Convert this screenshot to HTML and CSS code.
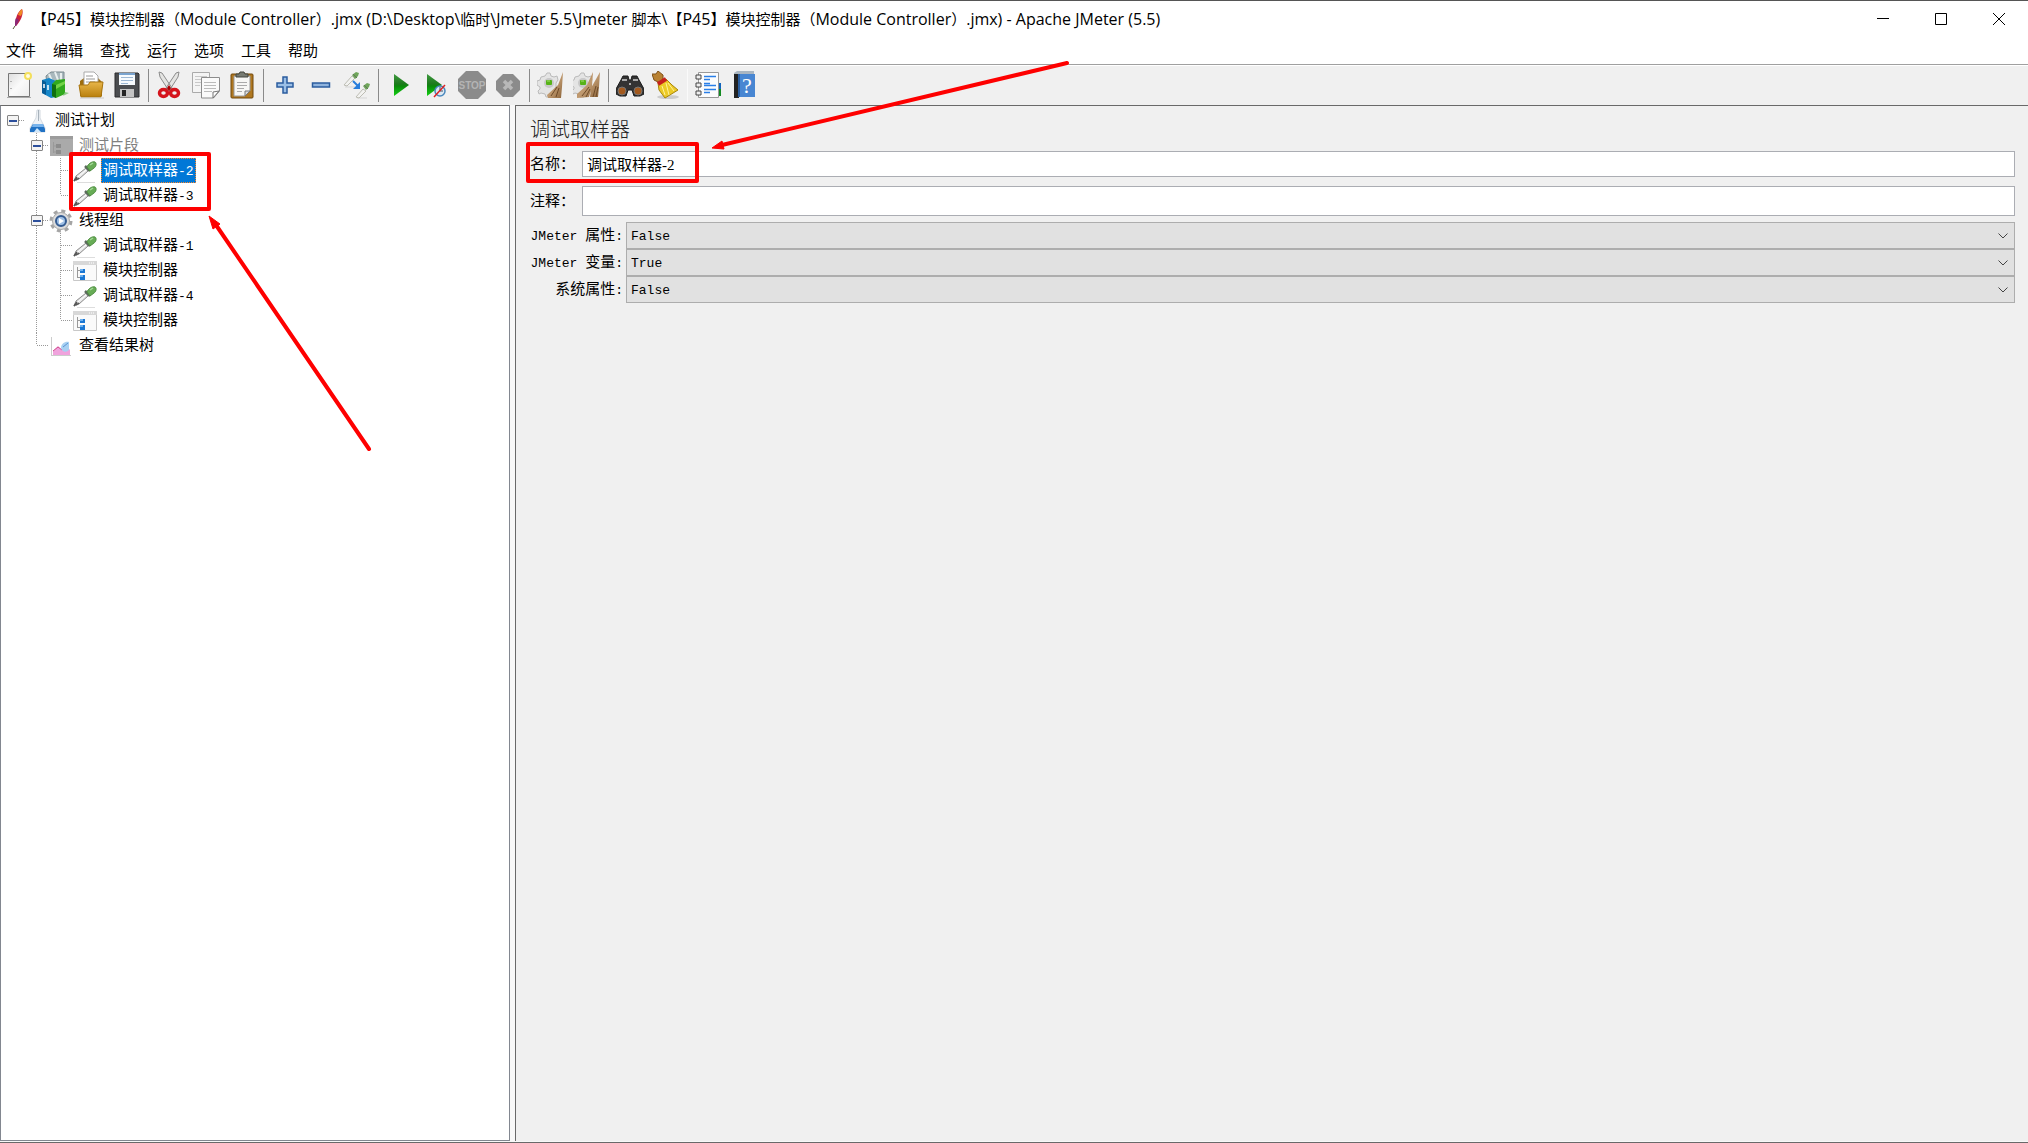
FILE: index.html
```html
<!DOCTYPE html>
<html lang="zh-CN">
<head>
<meta charset="utf-8">
<title>Apache JMeter (5.5)</title>
<link rel="stylesheet" href="styles.css">
</head>
<body>
<svg class="defs" aria-hidden="true">
  <defs>
    <linearGradient id="play" x1="0" y1="0" x2="0" y2="1"><stop offset="0" stop-color="#3f9a3f"/><stop offset=".45" stop-color="#1d7a1d"/><stop offset=".55" stop-color="#0a8a0a"/><stop offset="1" stop-color="#14d014"/></linearGradient>
    <linearGradient id="paper" x1="0" y1="0" x2="1" y2="1"><stop offset="0" stop-color="#dedede"/><stop offset=".5" stop-color="#fafafa"/><stop offset="1" stop-color="#ececec"/></linearGradient>
    <linearGradient id="gold" x1="0" y1="0" x2="0" y2="1"><stop offset="0" stop-color="#e8b64a"/><stop offset="1" stop-color="#b97f0c"/></linearGradient>
    <linearGradient id="bristle" x1="0" y1="0" x2="1" y2="1"><stop offset="0" stop-color="#a87848"/><stop offset=".5" stop-color="#c09a70"/><stop offset="1" stop-color="#8a6238"/></linearGradient>
    <symbol id="dropper" viewBox="0 0 24 24">
      <path d="M4 23.500h18" stroke="#ddd"/>
      <path d="M1 22l2-5 10-8 2 3-9 8z" fill="#e6e6e6" stroke="#8a8a8a"/>
      <path d="M5 18l8-7" stroke="#fff"/><path d="M1 22l3-4M3 21l3-2" stroke="#555" stroke-width="1.500"/>
      <path d="M12 7l5 5" stroke="#5c6a5c" stroke-width="2.500"/>
      <path d="M14 8c1-3 5-6 8-5 2 1 1 5-1 6l-4 3z" fill="#67ac55" stroke="#4f8e42"/><path d="M17 6l3-2" stroke="#a4d898" stroke-width="1.500"/>
    </symbol>
    <symbol id="module" viewBox="0 0 24 24">
      <path d="M.5 2.500h23v19H.5z" fill="#fafafa" stroke="#c8c8c8"/><path d="M0 2h24v4H0z" fill="#d8d8d8"/><path d="M16 4h6" stroke="#fff" stroke-dasharray="1 1"/>
      <path d="M4.500 8v10M4 11.500h4M4 18.500h4" stroke="#999" fill="none"/><path d="M7 10h5v4H7zM7 16h5v5H7z" fill="#1976d2"/><path d="M7 10h3v2H7zM7 16h3v2H7z" fill="#6cb0ee"/>
    </symbol>
    <symbol id="brush" viewBox="0 0 28 28">
      <path d="M9 5l2-3h3l1 3 3 1 3-1 1 4-2 3v9l-3 2-2 1-1 2h-4l-1-3-4-1-2 1-1-3 2-2v-2l-3-2v-4l3-1 1-3z" fill="#e4e4e4" stroke="#bbb"/>
      <circle cx="13" cy="12" r="5" fill="#c8c8c8"/><rect x="10" y="9" width="6" height="5" rx="1" fill="#57b318"/><path d="M11 10h3" stroke="#a4e070"/>
    </symbol>
  </defs>
</svg>

<div class="window">
  <header class="titlebar">
    <svg class="feather" viewBox="0 0 18 24" aria-hidden="true"><path d="M5 19C5 11 8 4 12 2c2 4-1 12-6 17z" fill="#c8203c"/><path d="M8 8c1-4 3-5 4-6 1 2 0 5-1 7z" fill="#f08a24"/><path d="M5 19c0-4 0-6 1-8l3 2c-1 3-2 4-3 6z" fill="#8a2a78"/><path d="M3 22l2-3" stroke="#553"/></svg>
    <h1 class="title">【<span>P45</span>】模块控制器（<span>Module Controller</span>）<span>.jmx (D:\Desktop\</span>临时<span>\Jmeter 5.5\Jmeter </span>脚本<span>\</span>【<span>P45</span>】模块控制器（<span>Module Controller</span>）<span>.jmx) - Apache JMeter (5.5)</span></h1>
    <div class="controls">
      <button aria-label="最小化"><svg viewBox="0 0 14 14"><path d="M1 6.500h12"/></svg></button>
      <button aria-label="最大化"><svg viewBox="0 0 14 14"><path d="M1.500 1.500h11v11h-11z"/></svg></button>
      <button aria-label="关闭"><svg viewBox="0 0 14 14"><path d="M1 1l12 12M13 1L1 13"/></svg></button>
    </div>
  </header>

  <nav class="menubar">
    <button>文件</button><button>编辑</button><button>查找</button><button>运行</button><button>选项</button><button>工具</button><button>帮助</button>
  </nav>

  <div class="toolbar" role="toolbar">
    <button aria-label="新建"><svg viewBox="0 0 28 28"><path d="M3.500 2.500h21v23h-21z" fill="url(#paper)" stroke="#777"/><path d="M2 26.500h24" stroke="#aaa"/><path d="M6 10v1M6 17v1" stroke="#777"/><circle cx="23" cy="5" r="3" fill="#fffbe0" stroke="#f3df5c" stroke-width="2"/></svg></button>
    <button aria-label="模板"><svg viewBox="0 0 28 28"><path d="M5 5l5-4h13v12H6z" fill="#a9b8bd" stroke="#7b8a90"/><path d="M8 3l3 7M14 1l3 8M20 2v8" stroke="#e8eeee" stroke-width="2"/><path d="M1 9l7-2 7 3v16l-5 1-9-5z" fill="#1686c8"/><path d="M1 9l4 2v13l-4-2z" fill="#075b96"/><path d="M3 13v4M7 14v5" stroke="#fff" stroke-width="1.500"/><path d="M11 13l4-4 9-1v15l-9 4-4-2z" fill="#31a91e"/><path d="M11 13l4 1v13l-4-2z" fill="#10700f"/><path d="M15 14l9-4v3l-9 5z" fill="#71d347"/><path d="M24 21l4 1-6 3" fill="#8fca87"/></svg></button>
    <button aria-label="打开"><svg viewBox="0 0 28 28"><path d="M3 10l4-3h14l4 4v14H3z" fill="#9d6d0e"/><path d="M7 1h10l4 4v12H7z" fill="#fff" stroke="#aaa"/><path d="M9 5h7M9 8h9M9 11h9" stroke="#999"/><path d="M2 14h9l2-3h13l-2 15H4z" fill="url(#gold)" stroke="#a8740e"/><path d="M3 27h24" stroke="#c8c8c8"/></svg></button>
    <button aria-label="保存"><svg viewBox="0 0 28 28"><path d="M2 2h23l1 1v23H2z" fill="#4b4d50" stroke="#2d2d2f"/><path d="M6 2h16v12H6z" fill="#f6fafd"/><path d="M6 2h16v2H6z" fill="#7aa4cf"/><path d="M8 6.500h12M8 9.500h12M8 12.500h7" stroke="#9db8d4"/><path d="M7 18h14v8H7z" fill="#c4c4c4"/><path d="M9 19h4v6H9z" fill="#242424"/></svg></button>
    <i class="sep"></i>
    <button aria-label="剪切"><svg viewBox="0 0 28 28"><path d="M3 1l3 1 10 15-3 3L4 6zM23 1l-3 1-10 15 3 3L22 6z" fill="#e4e4e2" stroke="#8c8c8c"/><path d="M11 17l2-3 2 3-2 3z" fill="#a00"/><ellipse cx="7.500" cy="22" rx="4" ry="3.500" fill="#efefef" stroke="#d5141c" stroke-width="3.500"/><ellipse cx="18.500" cy="22" rx="4" ry="3.500" fill="#efefef" stroke="#d5141c" stroke-width="3.500"/></svg></button>
    <button aria-label="复制"><svg viewBox="0 0 28 28"><path d="M.5 1.500h17v20H.5z" fill="#f4f4f4" stroke="#aaa"/><path d="M3 5.500h12M3 8.500h12M3 11.500h8M3 14.500h5" stroke="#c8c8c8"/><path d="M9.500 6.500h18V20l-6 7h-12z" fill="#fafafa" stroke="#8c8c8c"/><path d="M12 11.500h12M12 14.500h12M12 17.500h12M12 20.500h8" stroke="#bbb"/><path d="M21 27v-6l6-1z" fill="#fff" stroke="#777"/></svg></button>
    <button aria-label="粘贴"><svg viewBox="0 0 28 28"><rect x="3" y="3" width="22" height="24" rx="1" fill="#b07820" stroke="#70480c"/><path d="M6 5h16v15l-5 5H6z" fill="#f7f7f5" stroke="#999"/><path d="M9 11.500h10M9 14.500h10M9 17.500h7M9 20.500h5" stroke="#aaa"/><path d="M17 25v-5h5z" fill="#ddd" stroke="#777"/><path d="M8 6V3h3l1-2h4l1 2h3v3z" fill="#777b72" stroke="#44473f"/></svg></button>
    <i class="sep"></i>
    <button aria-label="展开"><svg viewBox="0 0 28 28"><path d="M12 6h4v6h6v4h-6v6h-4v-6H6v-4h6z" fill="#9bbfe6" stroke="#2b5c9e" stroke-width="1.500"/></svg></button>
    <button aria-label="折叠"><svg viewBox="0 0 28 28"><path d="M5.500 12h17v4h-17z" fill="#8fb3dd" stroke="#2b5c9e" stroke-width="1.500"/></svg></button>
    <button aria-label="切换"><svg viewBox="0 0 28 28"><path d="M2 16h10M14 27h10" stroke="#d5d5d5"/><path d="M1 14l8-9 3 2-8 8zM13 26l7-8 3 2-7 7z" fill="#f2f2f0" stroke="#bdbdb4"/><path d="M9 4l4-3 3 1-1 3-3 3zM20 15l4-3 3 1-1 3-3 3z" fill="#6fa55a"/><path d="M10 3l4 4M21 14l4 4" stroke="#5f7a58"/><path d="M10 10l5 5" stroke="#287ddb" stroke-width="2"/><path d="M17 11v7h-7z" fill="#287ddb"/></svg></button>
    <i class="sep"></i>
    <button aria-label="启动"><svg viewBox="0 0 28 28"><path d="M8 3l15 11L8 25z" fill="url(#play)"/></svg></button>
    <button aria-label="不停顿启动"><svg viewBox="0 0 28 28"><path d="M5 3l15 11L5 25z" fill="url(#play)"/><circle cx="18" cy="20" r="5" fill="#dce8f2" stroke="#4a88bd" stroke-width="1.500"/><path d="M18 16v4h3" stroke="#456" fill="none"/><path d="M12 26l11-12" stroke="#d22" stroke-width="1.500"/></svg></button>
    <button aria-label="停止" disabled><svg viewBox="0 0 28 28"><path d="M8 0h12l8 8v12l-8 8H8l-8-8V8z" fill="#8b8b8b"/><text x="14" y="18" text-anchor="middle" class="stop">STOP</text></svg></button>
    <button aria-label="关闭" disabled><svg viewBox="0 0 28 28"><path d="M9 3h10l7 7v9l-7 7H9l-7-7v-9z" fill="#8b8b8b"/><path d="M10 10l8 8M18 10l-8 8" stroke="#b8b8b8" stroke-width="3.500"/></svg></button>
    <i class="sep"></i>
    <button aria-label="清除"><svg viewBox="0 0 28 28"><use href="#brush" x="-1" y="0" width="28" height="28"/><path d="M26 1l-1 15-1 11-13 0-1-3 11-10z" fill="url(#bristle)"/><path d="M14 25l6-9M19 26l3-9" stroke="#6e4b28"/></svg></button>
    <button aria-label="清除全部"><svg viewBox="0 0 28 28"><use href="#brush" x="-3" y="0" width="28" height="28"/><path d="M20 1l-1 14-3 11-12 1v-4l10-9zM27 1l-1 15-1 10h-8l1-9z" fill="url(#bristle)"/><path d="M9 25l7-9M13 26l4-8M20 26l3-11M23 26l2-10" stroke="#6e4b28"/></svg></button>
    <i class="sep"></i>
    <button aria-label="查找"><svg viewBox="0 0 28 28"><path d="M5 9l2-4h5l1 4h2l1-4h5l2 4 5 9v5l-4 2h-6l-2-6h-4l-2 6H4l-4-2v-5z" fill="#333" stroke="#1c1c1c"/><path d="M6 9h5M17 9h5M13 13h2" stroke="#aaa" stroke-width="2"/><circle cx="6" cy="20" r="4" fill="#a45a1e" stroke="#777"/><circle cx="22" cy="20" r="4" fill="#a45a1e" stroke="#777"/></svg></button>
    <button aria-label="重置查找"><svg viewBox="0 0 28 28"><ellipse cx="16" cy="26" rx="11" ry="2" fill="#ccc"/><path d="M0 3l2 6 6 3 3-3V4L6 0 4 3z" fill="#b98233" stroke="#80531a"/><path d="M6 12l8-4 6 6 6 5-13 8-6-8z" fill="#ecca27" stroke="#a8860d"/><path d="M14 12l3 12M16 12l6 8M10 15l3 9" stroke="#fff19a"/><path d="M6 13l8-5" stroke="#c7201c" stroke-width="4"/></svg></button>
    <i class="sep faint"></i>
    <button aria-label="函数助手"><svg viewBox="0 0 28 28"><path d="M22 12h4v6h-4z" fill="#1164bd"/><path d="M22 18h4v7h-4z" fill="#138a22"/><path d="M3.500 1.500h20v25h-20z" fill="#fcfcfc" stroke="#999"/><path d="M9 5.500h12M9 8.500h6M9 12.500h6M9 14.500h12M9 18.500h12M9 21.500h6" stroke="#2a7fe8" stroke-width="1.500"/><path d="M1 4h5v4H1zM1 12h5v4H1zM1 20h5v4H1z" fill="#eee" stroke="#444"/></svg></button>
    <button aria-label="帮助"><svg viewBox="0 0 28 28"><path d="M3 2l3-2h17v3H3z" fill="#aab6c1"/><path d="M3 3h5v24H3z" fill="#222"/><path d="M7 3h17v23H7z" fill="#4886d2"/><path d="M7 3h2v23H7z" fill="#295d9e"/><text x="16" y="22" text-anchor="middle" class="help">?</text></svg></button>
  </div>

  <main class="workspace">
    <ul class="tree" role="tree">
      <li><i class="cell stub"><button class="toggle" aria-label="折叠"></button></i><svg class="icon" viewBox="0 0 24 24"><path d="M12 1h3v8l5 10v4H5v-4l6-10z" fill="#eef2f6" stroke="#d4dae0"/><path d="M8 15h10l2 5v3H5v-3z" fill="#2172c4"/><path d="M8 15h10l1 3H7z" fill="#79b4ec"/><path d="M9 23l3-4 4 4z" fill="#cfe6fa"/><path d="M13.500 1v11" stroke="#a9b3bc"/></svg><span class="name">测试计划</span></li>
      <li><i class="cell"></i><i class="cell down stub"><button class="toggle" aria-label="折叠"></button></i><svg class="icon" viewBox="0 0 24 24"><path d="M1 2h23v20H1z" fill="#aaa"/><path d="M1 2h23v3H1z" fill="#9c9c9c"/><path d="M4.500 8v11M5 12h3M5 18h3" stroke="#999"/><path d="M7 10h5v4H7zM7 16h5v4H7z" fill="#8c8c8c"/></svg><span class="name off">测试片段</span></li>
      <li><i class="cell"></i><i class="cell down"></i><i class="cell down stub"></i><svg class="icon"><use href="#dropper"/></svg><span class="name selected">调试取样器<b>-2</b></span></li>
      <li><i class="cell"></i><i class="cell down"></i><i class="cell end stub"></i><svg class="icon"><use href="#dropper"/></svg><span class="name">调试取样器<b>-3</b></span></li>
      <li><i class="cell"></i><i class="cell down stub"><button class="toggle" aria-label="折叠"></button></i><svg class="icon" viewBox="0 0 24 24"><circle cx="12" cy="12" r="10" fill="none" stroke="#a5a5a5" stroke-width="3" stroke-dasharray="4 3.850"/><circle cx="12" cy="12" r="8.500" fill="#dcdcdc" stroke="#a8a8a8"/><circle cx="12" cy="12" r="5" fill="#9fc0e6" stroke="#345b91" stroke-width="2"/><path d="M10 9l5 3-5 3z" fill="#fff"/></svg><span class="name">线程组</span></li>
      <li><i class="cell"></i><i class="cell down"></i><i class="cell down stub"></i><svg class="icon"><use href="#dropper"/></svg><span class="name">调试取样器<b>-1</b></span></li>
      <li><i class="cell"></i><i class="cell down"></i><i class="cell down stub"></i><svg class="icon"><use href="#module"/></svg><span class="name">模块控制器</span></li>
      <li><i class="cell"></i><i class="cell down"></i><i class="cell down stub"></i><svg class="icon"><use href="#dropper"/></svg><span class="name">调试取样器<b>-4</b></span></li>
      <li><i class="cell"></i><i class="cell down"></i><i class="cell end stub"></i><svg class="icon"><use href="#module"/></svg><span class="name">模块控制器</span></li>
      <li><i class="cell"></i><i class="cell end stub"></i><svg class="icon" viewBox="0 0 24 24"><path d="M2.500 3v19M2 21.500h20" stroke="#ccc"/><path d="M4 21v-4l5-5 4 4 5-4 3 4v5z" fill="#f0a3dd"/><path d="M4 17l5-4 4 3" stroke="#d24f8d" fill="none"/><path d="M12 14c0-4 4-7 8-6v8c-3 3-7 2-8-2z" fill="#a8d0f2"/><path d="M14 13l5-4" stroke="#5b96d5"/></svg><span class="name">查看结果树</span></li>
    </ul>

    <section class="panel">
      <h2>调试取样器</h2>
      <div class="field"><label for="name">名称：</label><input id="name" type="text" value="调试取样器-2"></div>
      <div class="field comment"><label for="comment">注释：</label><input id="comment" type="text"></div>
      <div class="options">
        <label for="jprops"><b>JMeter </b>属性<b>:</b></label><select id="jprops"><option>False</option><option>True</option></select>
        <label for="jvars"><b>JMeter </b>变量<b>:</b></label><select id="jvars"><option>True</option><option>False</option></select>
        <label for="sprops">系统属性<b>:</b></label><select id="sprops"><option>False</option><option>True</option></select>
      </div>
    </section>
  </main>
</div>

<svg class="marks" aria-hidden="true">
  <g fill="none" stroke="#fe0000" stroke-width="4" stroke-linejoin="round" stroke-linecap="round">
    <path d="M71 154h138v55H71zM528 144h169v37H528z"/>
    <path d="M1067 63L722 145M369 449L216 225"/>
  </g>
  <path d="M712 148l10-7 2 8zM209 216l11 8-7 5z" fill="#fe0000" stroke="#fe0000" stroke-linejoin="round"/>
</svg>
</body>
</html>
```
FILE: styles.css
```css
* { box-sizing: border-box; }
html, body { height: 100%; }
body {
  margin: 0;
  background: #f0f0f0;
  color: #000;
  font: 15px/24px "Liberation Serif", "Noto Sans CJK SC", sans-serif;
}
button { margin: 0; padding: 0; border: 0; background: none; font: inherit; color: inherit; }
b { font: 13px/20px "Liberation Mono", monospace; }
.defs { position: absolute; width: 0; height: 0; }

.window { display: flex; flex-direction: column; min-height: 100%; border-bottom: 1px solid #696969; }

.titlebar {
  display: flex;
  align-items: center;
  height: 37px;
  background: #fff;
  border-top: 1px solid #555;
}
.feather { width: 18px; height: 24px; margin: 0 4px 0 10px; flex: none; }
.title { flex: 1; margin: 0; font: 15px/24px "Noto Sans CJK SC", sans-serif; white-space: nowrap; }
.title span { font: 16px/24px "Open Sans", sans-serif; }
.controls { display: flex; height: 100%; }
.controls button { display: grid; place-items: center; width: 58px; }
.controls svg { width: 14px; height: 14px; fill: none; stroke: #000; }

.menubar {
  display: flex;
  gap: 17px;
  height: 28px;
  padding: 0 6px;
  background: #fff;
  border-bottom: 1px solid #a0a0a0;
  font-family: "Noto Sans CJK SC", sans-serif;
}
.menubar button { height: 26px; }

.toolbar {
  display: flex;
  height: 40px;
  padding: 0 1px;
  border-top: 1px solid #fff;
}
.toolbar button { display: grid; place-items: center; width: 36px; height: 38px; }
.toolbar svg { width: 28px; height: 28px; }
.sep { width: 7px; height: 33px; margin-top: 3px; background: linear-gradient(#8a8a8a, #8a8a8a) 3px 0 / 1px 100% no-repeat; }
.sep.faint { background-image: linear-gradient(#fafafa, #fafafa); }
.stop { font: bold 10px "Liberation Sans", sans-serif; fill: #b4b4b4; }
.help { font: 22px "Liberation Serif", serif; fill: #fff; }

.workspace { display: grid; grid-template-columns: 510px 1fr; gap: 5px; flex: 1; padding-bottom: 1px; background: #f8f8f8; }

.tree {
  margin: 0;
  padding: 2px 0;
  list-style: none;
  background: #fff;
  border: 1px solid #828790;
  border-top-color: #696969;
  font-family: "Noto Sans CJK SC", sans-serif;
}
.tree li { display: flex; align-items: center; height: 25px; }
.cell {
  --dots: repeating-linear-gradient(#999 0 1px, transparent 1px 2px);
  --dash: repeating-linear-gradient(90deg, #999 0 1px, transparent 1px 2px);
  display: grid;
  place-items: center;
  width: 24px;
  height: 25px;
  background-repeat: no-repeat;
}
.cell.stub { background-image: var(--dash); background-size: 12px 1px; background-position: 12px 12px; }
.cell.down { background-image: var(--dots); background-size: 1px 100%; background-position: 11px 0; }
.cell.down.stub { background-image: var(--dots), var(--dash); background-size: 1px 100%, 12px 1px; background-position: 11px 0, 12px 12px; }
.cell.end.stub { background-image: var(--dots), var(--dash); background-size: 1px 12px, 12px 1px; background-position: 11px 0, 12px 12px; }
.toggle {
  width: 12px;
  height: 11px;
  border: 1px solid #848484;
  border-radius: 1px;
  background: linear-gradient(#2c4f9c, #2c4f9c) center / 8px 2px no-repeat #f4f4f4;
}
.icon { width: 24px; height: 24px; flex: none; }
.name { height: 25px; margin-left: 4px; padding: 0 2px; line-height: 22px; white-space: nowrap; }
.name.off { color: #808080; }
.name.selected { background: #0078d7; color: #fff; outline: 1px dotted #ff8728; outline-offset: -1px; }

.panel {
  padding: 9px 13px 0 14px;
  background: #f0f0f0;
  border: solid #696969;
  border-width: 1px 0 0 1px;
}
.panel h2 { margin: 0; font: 20px/28px "Noto Sans CJK SC", sans-serif; font-weight: 300; color: #222; }
.field { display: flex; align-items: center; height: 26px; margin-top: 8px; }
.field label { width: 52px; }
.field input {
  flex: 1;
  min-width: 0;
  height: 100%;
  padding: 0 4px 2px;
  border: 1px solid #abadb3;
  background: #fff;
  font: inherit;
}
.field.comment { height: 30px; margin-top: 9px; }
.options { display: grid; grid-template-columns: 96px 1fr; margin-top: 6px; }
.options label { padding-right: 3px; text-align: right; line-height: 26px; height: 26px; white-space: pre; }
.options select {
  appearance: none;
  height: 27px;
  padding: 2px 4px 0;
  border: 1px solid #adadad;
  border-radius: 0;
  color: #000;
  font: 13px/24px "Liberation Mono", monospace;
  background: #e1e1e1 url("data:image/svg+xml,%3Csvg xmlns='http://www.w3.org/2000/svg' width='10' height='6'%3E%3Cpath d='M.5.5L5 5 9.500.5' fill='none' stroke='%23444'/%3E%3C/svg%3E") right 6px center no-repeat;
}

.marks { position: absolute; top: 0; left: 0; width: 1080px; height: 460px; pointer-events: none; }
```
